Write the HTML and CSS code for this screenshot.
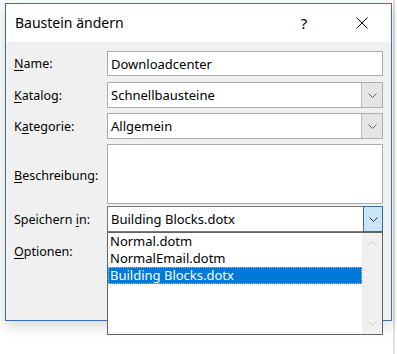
FILE: index.html
```html
<!DOCTYPE html>
<html lang="de">
<head>
    <meta charset="UTF-8">
    <title>Baustein ändern</title>
    <link rel="stylesheet" href="styles.css">
</head>
<body>
    <div class="dialog">
        <div class="title-bar">
            <span class="title">Baustein ändern</span>
            <span class="title-help">?</span>
            <span class="title-close">
                <svg width="12" height="12" viewBox="0 0 12 12"><path d="M0.5 0.5 L11.5 11.5 M11.5 0.5 L0.5 11.5" stroke="#000" stroke-width="1" fill="none"/></svg>
            </span>
        </div>

        <div class="form">
            <label class="label label-name"><span><u>N</u>ame:</span></label>
            <div class="field field-name">Downloadcenter</div>

            <label class="label"><span><u>K</u>atalog:</span></label>
            <div class="field combo">
                <span class="combo-text">Schnellbausteine</span>
                <span class="combo-btn"><svg width="9" height="5" viewBox="0 0 9 5"><path d="M0.5 0.5 L4.5 4.5 L8.5 0.5" stroke="#606060" fill="none"/></svg></span>
            </div>

            <label class="label"><span>K<u>a</u>tegorie:</span></label>
            <div class="field combo">
                <span class="combo-text">Allgemein</span>
                <span class="combo-btn"><svg width="9" height="5" viewBox="0 0 9 5"><path d="M0.5 0.5 L4.5 4.5 L8.5 0.5" stroke="#606060" fill="none"/></svg></span>
            </div>

            <label class="label label-desc"><span><u>B</u>eschreibung:</span></label>
            <div class="field textarea"></div>

            <label class="label"><span>Speichern <u>i</u>n:</span></label>
            <div class="field combo combo-open">
                <span class="combo-text">Building Blocks.dotx</span>
                <span class="combo-btn"><svg width="9" height="5" viewBox="0 0 9 5"><path d="M0.5 0.5 L4.5 4.5 L8.5 0.5" stroke="#333" fill="none"/></svg></span>

                <div class="dropdown">
                    <ul class="dropdown-items">
                        <li>Normal.dotm</li>
                        <li>NormalEmail.dotm</li>
                        <li class="selected">Building Blocks.dotx</li>
                    </ul>
                    <div class="scrollbar">
                        <svg width="9" height="5" viewBox="0 0 9 5"><path d="M0.5 4.5 L4.5 0.5 L8.5 4.5" stroke="#c8c8c8" fill="none"/></svg>
                        <svg width="9" height="5" viewBox="0 0 9 5"><path d="M0.5 0.5 L4.5 4.5 L8.5 0.5" stroke="#c8c8c8" fill="none"/></svg>
                    </div>
                </div>
            </div>

            <label class="label label-options"><span><u>O</u>ptionen:</span></label>
            <div class="field-empty"></div>
        </div>
    </div>
</body>
</html>
```

FILE: styles.css
```css
body {
    margin: 0;
    padding: 3px 0 0 5px;
    background: #fff linear-gradient(to right, transparent 393px, #e2e2e2 393px, #e2e2e2 395px, transparent 395px);
    height: 354px;
    box-sizing: border-box;
    font-family: "Noto Sans", "Open Sans", sans-serif;
    font-size: 13px;
    color: #000;
}

.dialog {
    width: 387px;
    height: 318px;
    box-sizing: border-box;
    border: 1px solid #2f74b8;
    background: #f0f0f0;
    box-shadow: 0 4px 14px rgba(0, 0, 0, 0.18);
    display: flex;
    flex-direction: column;
}

.title-bar {
    height: 38px;
    background: #fff;
    display: flex;
    align-items: center;
    padding-left: 9px;
}

.title {
    flex: 1;
    font-size: 14px;
    padding-bottom: 1px;
}

.title-help {
    font-size: 15px;
    width: 20px;
    margin-right: 42px;
    text-align: center;
}

.title-close {
    width: 12px;
    margin-right: 23px;
    display: flex;
}

.form {
    display: grid;
    grid-template-columns: 93px 276px;
    grid-auto-rows: 26px;
    row-gap: 5px;
    padding: 9px 8px 0 8px;
}

.label {
    display: flex;
    align-items: center;
    font-size: 12.5px;
}

.label u {
    text-decoration-thickness: 1px;
    text-underline-offset: 2px;
}

.field {
    background: #fff;
    border: 1px solid #acacac;
    display: flex;
    align-items: center;
    padding-left: 3px;
    position: relative;
}

.field-name {
    height: 25px;
    box-sizing: border-box;
}

.label-name {
    height: 25px;
}

.combo-text {
    flex: 1;
}

.combo-btn {
    width: 20px;
    height: 24px;
    background: #e5e5e5;
    border-left: 1px solid #bcbcbc;
    display: flex;
    align-items: center;
    justify-content: center;
}

.textarea {
    grid-row: span 2;
    height: 58px;
    align-self: start;
}

.label-desc {
    grid-row: span 2;
    height: 58px;
    padding-top: 4px;
    box-sizing: border-box;
}

.label-options {
    padding-top: 2px;
}

.combo-open {
    border-color: #7a7a7a;
}

.combo-open .combo-btn {
    background: #cce4f7;
    border: 1px solid #3c6a94;
    height: 26px;
    margin: -1px -1px -1px 0;
    box-sizing: border-box;
}

.dropdown {
    position: absolute;
    left: -1px;
    top: 25px;
    width: 276px;
    height: 103px;
    box-sizing: border-box;
    background: #fff;
    border: 1px solid #646464;
    display: flex;
    z-index: 10;
}

.dropdown-items {
    list-style: none;
    margin: 0;
    padding: 0;
    flex: 1;
}

.dropdown-items li {
    height: 17px;
    line-height: 17px;
    padding-left: 2px;
    font-size: 13px;
}

.dropdown-items li.selected {
    background: #0078d7;
    color: #fff;
    outline: 1px dotted #9cc6ea;
    outline-offset: -1px;
}

.scrollbar {
    width: 20px;
    background: #f0f0f0;
    display: flex;
    flex-direction: column;
    align-items: center;
    justify-content: space-between;
    padding: 8px 0 8px;
}
```
